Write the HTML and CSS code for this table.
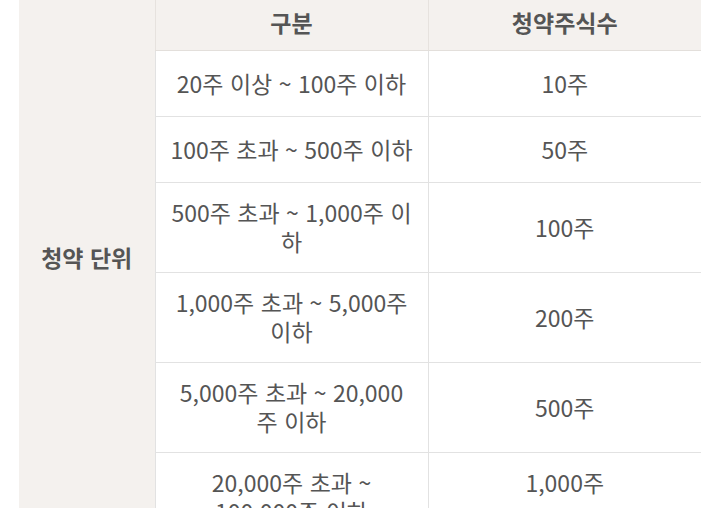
FILE: index.html
```html
<!DOCTYPE html>
<html lang="ko">
<head>
<meta charset="utf-8">
<link rel="stylesheet" href="styles.css">
</head>
<body>
<div class="wrap">
<table class="sub-table">
  <colgroup>
    <col class="c-label">
    <col class="c-range">
    <col class="c-qty">
  </colgroup>
  <tbody>
    <tr class="head">
      <th class="label" rowspan="8">청약 단위</th>
      <th>구분</th>
      <th>청약주식수</th>
    </tr>
    <tr><td>20주 이상 ~ 100주 이하</td><td>10주</td></tr>
    <tr><td>100주 초과 ~ 500주 이하</td><td>50주</td></tr>
    <tr><td>500주 초과 ~ 1,000주 이하</td><td>100주</td></tr>
    <tr><td>1,000주 초과 ~ 5,000주 이하</td><td>200주</td></tr>
    <tr><td>5,000주 초과 ~ 20,000주 이하</td><td>500주</td></tr>
    <tr><td>20,000주 초과 ~ 100,000주 이하</td><td>1,000주<br>&nbsp;</td></tr>
    <tr><td>100,000주 초과</td><td>5,000주</td></tr>
  </tbody>
</table>
</div>
</body>
</html>
```
FILE: styles.css
```css
html, body {
  margin: 0;
  padding: 0;
  background: #ffffff;
  overflow: hidden;
}
.wrap {
  padding-left: 19px;
  margin-top: -5px;
}
.sub-table {
  border-collapse: collapse;
  width: 682px;
  table-layout: fixed;
  font-family: "Noto Sans CJK KR", "Noto Sans", sans-serif;
  font-size: 23px;
  line-height: 29px;
  color: #555555;
}
.c-label { width: 136px; }
.c-range { width: 273px; }
.c-qty { width: 273px; }
.sub-table th,
.sub-table td {
  text-align: center;
  vertical-align: middle;
  padding: 15px 14px 16px;
  height: 34px;
  border-left: 1px solid #e2e2e2;
  border-top: 1px solid #e2e2e2;
  font-weight: 400;
}
.sub-table .head th {
  background: #f4f1ee;
  font-weight: 700;
  height: auto;
  padding: 13px 14px 13px;
  border-top: none;
  border-bottom: 1px solid #e3dfdb;
  border-left-color: #e6e2de;
}
.sub-table .head th.label {
  border: none;
  background: #f4f1ee;
  vertical-align: top;
  padding-top: 248px;
}
```
